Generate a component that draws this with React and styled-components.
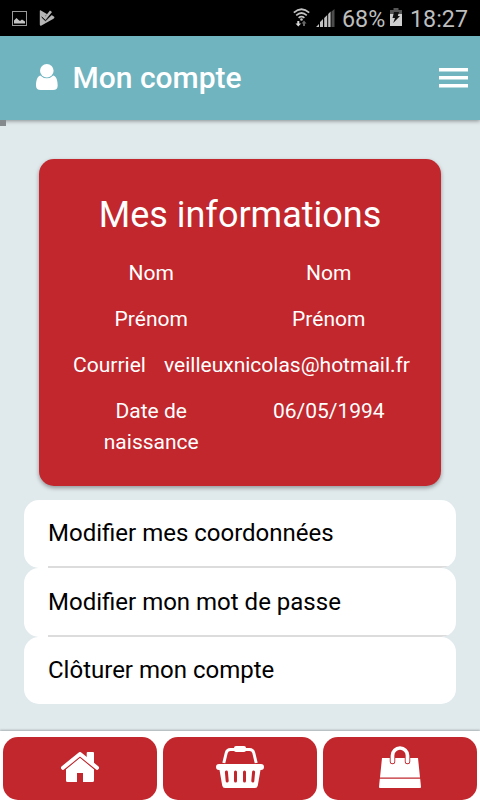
import React from "react";
import styled, { createGlobalStyle } from "styled-components";

const GlobalStyle = createGlobalStyle`
  * { box-sizing: border-box; }
  body {
    margin: 0;
    font-family: Roboto, "Liberation Sans", sans-serif;
    background: #e0e9ec;
  }
`

const Screen = styled.div`
  width: 480px;
  height: 800px;
  display: flex;
  flex-direction: column;
  overflow: hidden;
  background: #e0e9ec;
`

const StatusBar = styled.div`
  flex: none;
  height: 36px;
  padding: 0 12px;
  display: flex;
  align-items: center;
  background: #000;
  color: #bdbdbd;
  font-size: 23.3px;
  line-height: 36px;
  svg { display: block; flex: none; }
`
const Notifications = styled.div`
  display: flex;
  align-items: center;
  gap: 12px;
  flex: 1;
`
const StatusText = styled.span`
  width: ${p => p.$width}px;
  margin-left: ${p => p.$gap}px;
  padding-top: 2px;
  white-space: nowrap;
`
const BatterySlot = styled.div`
  margin-left: 5px;
  padding-bottom: 2px;
`
const SignalSlot = styled.div`
  margin-left: 6px;
`

const Header = styled.header`
  flex: none;
  height: 84px;
  padding: 0 12px 0 36px;
  display: flex;
  align-items: center;
  background: #6fb4bf;
  color: #fff;
  box-shadow: 0 1px 4px rgba(0,0,0,0.4);
  z-index: 1;
  svg { display: block; }
`
const HeaderTitle = styled.h1`
  flex: 1;
  margin: 0 0 0 14.5px;
  font-size: 30px;
  line-height: 36px;
  font-weight: 500;
  white-space: nowrap;
`

const Progress = styled.div`
  width: 6px;
  height: 6px;
  background: #858a8c;
  position: relative;
  z-index: 2;
`

const Content = styled.main`
  flex: 1;
  display: flex;
  flex-direction: column;
`

const Card = styled.section`
  height: 327px;
  margin: 33px 39px 14px;
  padding: 34px 23.5px 0;
  border-radius: 15px;
  background: #c1272d;
  color: #fff;
  text-align: center;
  box-shadow: 0 2px 4px rgba(0,0,0,0.35);
`
const CardTitle = styled.h2`
  margin: 0 0 21px;
  font-size: 36px;
  line-height: 44px;
  font-weight: 400;
  white-space: nowrap;
`
const InfoRow = styled.div`
  display: flex;
  margin-bottom: 15px;
  font-size: 21px;
  line-height: 31px;
`
const Cell = styled.div`
  flex: 1;
  padding: 0 7.5px;
`

const Menu = styled.ul`
  margin: 0 24px;
  padding: 0;
  list-style: none;
`
const MenuItem = styled.li`
  height: ${p => p.$height}px;
  padding-left: 24px;
  border-radius: 15px;
  overflow: hidden;
  background: #fff;
  color: #000;
  font-size: 24px;
  line-height: ${p => p.$line}px;
`
const MenuLabel = styled.div`
  height: 100%;
  border-bottom: ${p => p.$last ? "none" : "2px solid #dcdcdc"};
`

const TabBar = styled.nav`
  flex: none;
  height: 69px;
  padding: 6px 3px 0;
  display: grid;
  grid-template-columns: repeat(3, 1fr);
  gap: 6px;
  background: #fff;
  box-shadow: 0 -1px 2px rgba(0,0,0,0.25);
`
const Tab = styled.button`
  height: 63px;
  padding: 0 0 3px;
  border: none;
  border-radius: 15px;
  background: #c1272d;
  display: flex;
  align-items: center;
  justify-content: center;
`

const PictureIcon = () => (
  <svg width="15" height="15" viewBox="0 0 15 15">
    <rect x="0.5" y="0.5" width="14" height="14" fill="none" stroke="#999" />
    <path d="M2 12.5V9.5L4.5 7l2 2 1.5 1 2-1.5 3 2v2z" fill="#c4c4c4" />
  </svg>
)

const PlayCheckIcon = () => (
  <svg width="16" height="16" viewBox="0 0 16 16">
    <path d="M1.5.3L8.3 4.2 5.6 6.5 4.2 5.4 2.8 7 6.2 10.2 12.6 5 15.2 6.8Q16 8 14.5 8.8L2 15.7Q.8 15.8.8 14.5V1Q.8.2 1.5.3z" fill="#b5b5b5" />
    <path d="M3.2 5.2L6.4 8.2 12 1.2" fill="none" stroke="#b5b5b5" strokeWidth="2.6" />
    <path d="M2.6 7L6.5 10.8 12.6 4.6" fill="none" stroke="#000" strokeWidth="1" />
  </svg>
)

const WifiIcon = () => (
  <svg width="17" height="20" viewBox="0 0 17 20">
    <g fill="none" stroke="#c2c2c2" strokeWidth="1.7">
      <path d="M.8 4.7Q8.5-2.2 16.2 4.7" />
      <path d="M3.2 7.3Q8.5 2.7 13.8 7.3" />
      <path d="M5.6 9.8Q8.5 7.3 11.4 9.8" />
    </g>
    <circle cx="8.5" cy="11.5" r="1.3" fill="#c2c2c2" />
    <path d="M4.3 13h2v2.5h1.8L5.3 18.5 2.5 15.5h1.8z" fill="#d8d8d8" />
    <path d="M10 18v-2.5H8.5L11 12.5l2.5 3H12V18z" fill="#666" />
  </svg>
)

const SignalIcon = () => (
  <svg width="19" height="18" viewBox="0 0 19 18">
    <path d="M0 18l3-3v3zM4 18v-5l3-3v8zM8.2 18V9l3-3v12zM12.2 18V5l2.4-2.4V18z" fill="#c2c2c2" />
    <path d="M15.5 18V2.5L18.5 0v18z" fill="#4c4c4c" />
  </svg>
)

const BatteryIcon = () => (
  <svg width="12" height="18" viewBox="0 0 12 18">
    <path d="M3.5 0h5v2H12v4H0V2h3.5z" fill="#555" />
    <path d="M0 6h12v12H0z" fill="#d0d0d0" />
    <path d="M4 4h5L7.8 8H10L3.2 15 5 10H2.5z" fill="#111" />
  </svg>
)

const PersonIcon = () => (
  <svg width="22" height="28" viewBox="0 0 22 28" fill="#fff">
    <circle cx="10.8" cy="6.8" r="6.8" />
    <path d="M4.3 11.4Q7 14.2 10.8 14.2T17.3 11.4C20.5 12.5 21.7 16.5 21.7 21.5Q21.7 26 17 26H4.7Q0 26 0 21.5C0 16.5 1.2 12.5 4.3 11.4z" />
  </svg>
)

const MenuIcon = () => (
  <svg width="29" height="20" viewBox="0 0 29 20" fill="#fff">
    <path d="M0 0h29v3.5H0zM0 8h29v3.5H0zM0 16h29v3.5H0z" />
  </svg>
)

const HomeIcon = () => (
  <svg width="40" height="30" viewBox="0 0 40 30">
    <path d="M20 5.5L34 17v11.5Q34 30 32.5 30H23v-9h-6v9H7.5Q6 30 6 28.5V17z" fill="#fff" />
    <path d="M3 15.8L20 2 37 15.8" fill="none" stroke="#c1272d" strokeWidth="6" strokeLinejoin="round" />
    <path d="M26.7 1Q26.7 0 27.7 0H33Q34 0 34 1v11l-7.3-5z" fill="#fff" />
    <path d="M3 15.8L20 2 37 15.8" fill="none" stroke="#fff" strokeWidth="4" strokeLinecap="round" strokeLinejoin="round" />
  </svg>
)

const BasketIcon = () => (
  <svg width="48" height="42" viewBox="0 0 48 42">
    <path d="M7.8 17L10.2 7Q11.1 3.5 14.5 3.5H33.5Q36.9 3.5 37.8 7L40.2 17" fill="none" stroke="#fff" strokeWidth="3" />
    <rect x="18" y="0" width="12" height="6" rx="2" fill="#fff" />
    <path d="M3 18H45Q48 18 48 21T45 24H44.5L41.8 39.5Q41.3 42 39 42H9Q6.7 42 6.2 39.5L3.5 24H3Q0 24 0 21T3 18z" fill="#fff" />
    <path d="M10.4 26L11.2 35M19.5 26V35M28.5 26V35M37.6 26L36.8 35" stroke="#c1272d" strokeWidth="3" strokeLinecap="round" />
  </svg>
)

const BagIcon = () => (
  <svg width="42" height="42" viewBox="0 0 42 42">
    <path d="M3 12H39L41 31.6H1zM.8 32.8H41.2L42 41Q42 42 41 42H1Q0 42 0 41z" fill="#fff" />
    <path d="M13.5 15.5V9.5a7.5 7.5 0 0 1 15 0v6" fill="none" stroke="#c1272d" strokeWidth="5.5" strokeLinecap="round" />
    <path d="M13.5 15.5V9.5a7.5 7.5 0 0 1 15 0v6" fill="none" stroke="#fff" strokeWidth="3.7" strokeLinecap="round" />
  </svg>
)

const infos = [
  ["Nom", "Nom"],
  ["Prénom", "Prénom"],
  ["Courriel", "veilleuxnicolas@hotmail.fr"],
  ["Date de naissance", "06/05/1994"],
]

const actions = [
  { label: "Modifier mes coordonnées", height: 68, line: 67 },
  { label: "Modifier mon mot de passe", height: 69, line: 69 },
  { label: "Clôturer mon compte", height: 67, line: 67, last: true },
]

const App = () => {
  return (
    <Screen>
      <GlobalStyle />
      <StatusBar>
        <Notifications>
          <PictureIcon />
          <PlayCheckIcon />
        </Notifications>
        <WifiIcon />
        <SignalSlot><SignalIcon /></SignalSlot>
        <StatusText $width={43} $gap={7}>68%</StatusText>
        <BatterySlot><BatteryIcon /></BatterySlot>
        <StatusText $width={58} $gap={8}>18:27</StatusText>
      </StatusBar>
      <Header>
        <PersonIcon />
        <HeaderTitle>Mon compte</HeaderTitle>
        <MenuIcon />
      </Header>
      <Content>
        <Progress />
        <Card>
          <CardTitle>Mes informations</CardTitle>
          {infos.map(([label, value]) => (
            <InfoRow key={label}>
              <Cell>{label}</Cell>
              <Cell>{value}</Cell>
            </InfoRow>
          ))}
        </Card>
        <Menu>
          {actions.map(({ label, height, line, last }) => (
            <MenuItem key={label} $height={height} $line={line}>
              <MenuLabel $last={last}>{label}</MenuLabel>
            </MenuItem>
          ))}
        </Menu>
      </Content>
      <TabBar>
        <Tab aria-label="Accueil"><HomeIcon /></Tab>
        <Tab aria-label="Panier"><BasketIcon /></Tab>
        <Tab aria-label="Commandes"><BagIcon /></Tab>
      </TabBar>
    </Screen>
  )
}

export default App;
